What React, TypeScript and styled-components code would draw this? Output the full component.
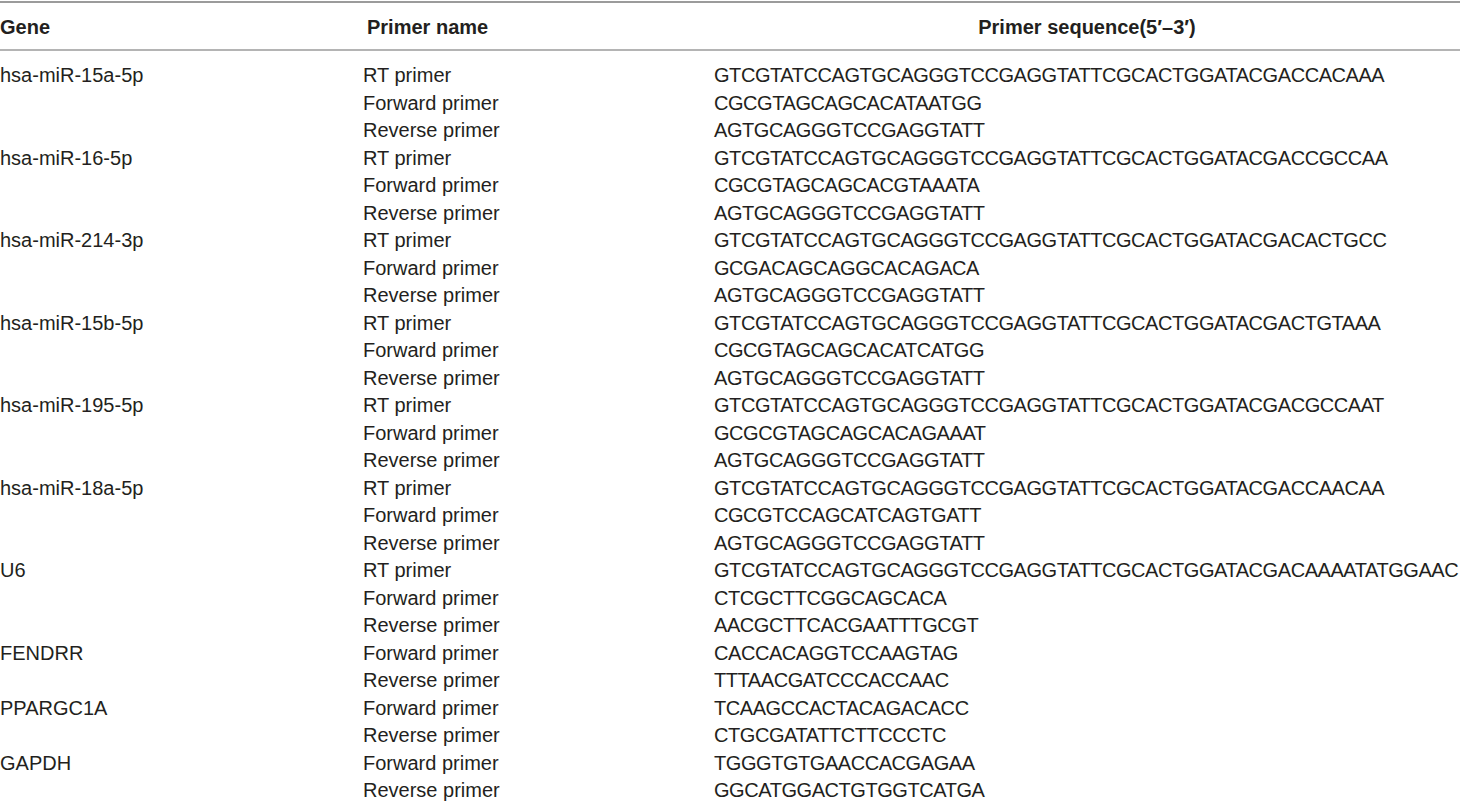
import React from "react";
import styled, { createGlobalStyle } from "styled-components";

const Global = createGlobalStyle`
  html, body { margin: 0; padding: 0; background: #ffffff; overflow: hidden; }
  body { font-family: "Liberation Sans", Arial, Helvetica, sans-serif; color: #231f20; }
`;

const Page = styled.div`
  padding-top: 1px;
  width: 1460px;
`;

const Header = styled.div`
  display: grid;
  grid-template-columns: 363px 351px 1fr;
  height: 44px;
  padding-top: 2px;
  align-items: center;
  border-top: 2px solid #9b9b9b;
  border-bottom: 2px solid #b4b4b4;
`;

const HeadCell = styled.div<{ $center?: boolean; $indent?: number }>`
  font-weight: 700;
  font-size: 20px;
  white-space: nowrap;
  text-align: ${(p) => (p.$center ? "center" : "left")};
  padding-left: ${(p) => p.$indent ?? 0}px;
`;

const Body = styled.div`
  padding-top: 11px;
`;

const Row = styled.div`
  display: grid;
  grid-template-columns: 363px 351px 1fr;
  height: 27.5px;
  line-height: 27.5px;
  font-size: 20px;
  white-space: nowrap;
`;

const Cell = styled.div`
  overflow: visible;
`;

const SeqCell = styled.div`
  letter-spacing: -0.44px;
`;

type Primer = [string, string];
const groups: { gene: string; primers: Primer[] }[] = [
  {
    gene: "hsa-miR-15a-5p",
    primers: [
      ["RT primer", "GTCGTATCCAGTGCAGGGTCCGAGGTATTCGCACTGGATACGACCACAAA"],
      ["Forward primer", "CGCGTAGCAGCACATAATGG"],
      ["Reverse primer", "AGTGCAGGGTCCGAGGTATT"],
    ],
  },
  {
    gene: "hsa-miR-16-5p",
    primers: [
      ["RT primer", "GTCGTATCCAGTGCAGGGTCCGAGGTATTCGCACTGGATACGACCGCCAA"],
      ["Forward primer", "CGCGTAGCAGCACGTAAATA"],
      ["Reverse primer", "AGTGCAGGGTCCGAGGTATT"],
    ],
  },
  {
    gene: "hsa-miR-214-3p",
    primers: [
      ["RT primer", "GTCGTATCCAGTGCAGGGTCCGAGGTATTCGCACTGGATACGACACTGCC"],
      ["Forward primer", "GCGACAGCAGGCACAGACA"],
      ["Reverse primer", "AGTGCAGGGTCCGAGGTATT"],
    ],
  },
  {
    gene: "hsa-miR-15b-5p",
    primers: [
      ["RT primer", "GTCGTATCCAGTGCAGGGTCCGAGGTATTCGCACTGGATACGACTGTAAA"],
      ["Forward primer", "CGCGTAGCAGCACATCATGG"],
      ["Reverse primer", "AGTGCAGGGTCCGAGGTATT"],
    ],
  },
  {
    gene: "hsa-miR-195-5p",
    primers: [
      ["RT primer", "GTCGTATCCAGTGCAGGGTCCGAGGTATTCGCACTGGATACGACGCCAAT"],
      ["Forward primer", "GCGCGTAGCAGCACAGAAAT"],
      ["Reverse primer", "AGTGCAGGGTCCGAGGTATT"],
    ],
  },
  {
    gene: "hsa-miR-18a-5p",
    primers: [
      ["RT primer", "GTCGTATCCAGTGCAGGGTCCGAGGTATTCGCACTGGATACGACCAACAA"],
      ["Forward primer", "CGCGTCCAGCATCAGTGATT"],
      ["Reverse primer", "AGTGCAGGGTCCGAGGTATT"],
    ],
  },
  {
    gene: "U6",
    primers: [
      ["RT primer", "GTCGTATCCAGTGCAGGGTCCGAGGTATTCGCACTGGATACGACAAAATATGGAAC"],
      ["Forward primer", "CTCGCTTCGGCAGCACA"],
      ["Reverse primer", "AACGCTTCACGAATTTGCGT"],
    ],
  },
  {
    gene: "FENDRR",
    primers: [
      ["Forward primer", "CACCACAGGTCCAAGTAG"],
      ["Reverse primer", "TTTAACGATCCCACCAAC"],
    ],
  },
  {
    gene: "PPARGC1A",
    primers: [
      ["Forward primer", "TCAAGCCACTACAGACACC"],
      ["Reverse primer", "CTGCGATATTCTTCCCTC"],
    ],
  },
  {
    gene: "GAPDH",
    primers: [
      ["Forward primer", "TGGGTGTGAACCACGAGAA"],
      ["Reverse primer", "GGCATGGACTGTGGTCATGA"],
    ],
  },
];

export default function App() {
  return (
    <Page>
      <Global />
      <Header>
        <HeadCell>Gene</HeadCell>
        <HeadCell $indent={4}>Primer name</HeadCell>
        <HeadCell $center>Primer sequence(5′–3′)</HeadCell>
      </Header>
      <Body>
        {groups.map((g) =>
          g.primers.map(([name, seq], i) => (
            <Row key={g.gene + name}>
              <Cell>{i === 0 ? g.gene : ""}</Cell>
              <Cell>{name}</Cell>
              <SeqCell>{seq}</SeqCell>
            </Row>
          ))
        )}
      </Body>
    </Page>
  );
}
